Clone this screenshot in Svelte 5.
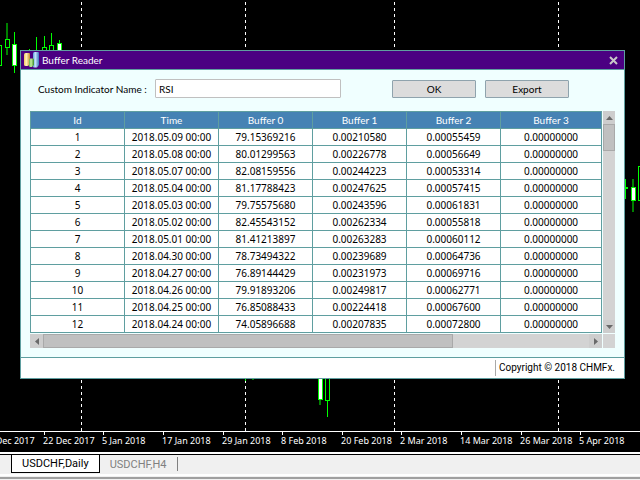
<script lang="ts">
	type Candle = {
		x: number;
		high: number;
		low: number;
		top: number;
		bottom: number;
		kind: 'bull' | 'bear';
		dim?: boolean;
	};

	const columns = ['Id', 'Time', 'Buffer 0', 'Buffer 1', 'Buffer 2', 'Buffer 3'];

	const rows = [
		['2018.05.09 00:00', '79.15369216', '0.00210580', '0.00055459', '0.00000000'],
		['2018.05.08 00:00', '80.01299563', '0.00226778', '0.00056649', '0.00000000'],
		['2018.05.07 00:00', '82.08159556', '0.00244223', '0.00053314', '0.00000000'],
		['2018.05.04 00:00', '81.17788423', '0.00247625', '0.00057415', '0.00000000'],
		['2018.05.03 00:00', '79.75575680', '0.00243596', '0.00061831', '0.00000000'],
		['2018.05.02 00:00', '82.45543152', '0.00262334', '0.00055818', '0.00000000'],
		['2018.05.01 00:00', '81.41213897', '0.00263283', '0.00060112', '0.00000000'],
		['2018.04.30 00:00', '78.73494322', '0.00239689', '0.00064736', '0.00000000'],
		['2018.04.27 00:00', '76.89144429', '0.00231973', '0.00069716', '0.00000000'],
		['2018.04.26 00:00', '79.91893206', '0.00249817', '0.00062771', '0.00000000'],
		['2018.04.25 00:00', '76.85088433', '0.00224418', '0.00067600', '0.00000000'],
		['2018.04.24 00:00', '74.05896688', '0.00207835', '0.00072800', '0.00000000']
	];

	const separators = [81, 245, 394, 558];

	const candles: Candle[] = [
		{ x: -1, high: 45, low: 65, top: 45, bottom: 65, kind: 'bull' },
		{ x: 7, high: 23, low: 55, top: 39, bottom: 47, kind: 'bull', dim: true },
		{ x: 14, high: 32, low: 73, top: 44, bottom: 65, kind: 'bear' },
		{ x: 29, high: 49, low: 60, top: 52, bottom: 58, kind: 'bull' },
		{ x: 36, high: 37, low: 60, top: 50, bottom: 58, kind: 'bull' },
		{ x: 44, high: 36, low: 60, top: 47, bottom: 58, kind: 'bull' },
		{ x: 51, high: 33, low: 60, top: 45, bottom: 58, kind: 'bull' },
		{ x: 59, high: 40, low: 60, top: 43, bottom: 58, kind: 'bear' },
		{ x: 245, high: 370, low: 381, top: 370, bottom: 376, kind: 'bull' },
		{ x: 253, high: 370, low: 380, top: 370, bottom: 376, kind: 'bull', dim: true },
		{ x: 320, high: 360, low: 405, top: 360, bottom: 399, kind: 'bear', dim: true },
		{ x: 327, high: 360, low: 417, top: 360, bottom: 400, kind: 'bull' },
		{ x: 625, high: 179, low: 199, top: 187, bottom: 188, kind: 'bull' },
		{ x: 633, high: 179, low: 212, top: 187, bottom: 200, kind: 'bear', dim: true },
		{ x: 640, high: 166, low: 200, top: 166, bottom: 200, kind: 'bull' }
	];

	const axis = [
		{ x: -16, label: '12 Dec 2017' },
		{ x: 44, label: '22 Dec 2017' },
		{ x: 103, label: '5 Jan 2018' },
		{ x: 163, label: '17 Jan 2018' },
		{ x: 223, label: '29 Jan 2018' },
		{ x: 282, label: '8 Feb 2018' },
		{ x: 342, label: '20 Feb 2018' },
		{ x: 401, label: '2 Mar 2018' },
		{ x: 461, label: '14 Mar 2018' },
		{ x: 521, label: '26 Mar 2018' },
		{ x: 580, label: '5 Apr 2018' }
	];

	let indicator = $state('RSI');
	let open = $state(true);
	let activeTab = $state('USDCHF,Daily');

	function exportCsv() {
		const lines = [columns.join(','), ...rows.map((row, i) => [i + 1, ...row].join(','))];
		const url = URL.createObjectURL(new Blob([lines.join('\n')], { type: 'text/csv' }));
		const link = document.createElement('a');
		link.href = url;
		link.download = `${indicator}.csv`;
		link.click();
		URL.revokeObjectURL(url);
	}
</script>

<div class="terminal">
	<main class="workspace">
		<svg class="chart" aria-hidden="true" shape-rendering="crispEdges">
			{#each separators as x}
				<line class="separator" x1={x + 0.5} x2={x + 0.5} y1="-4" y2="100%" />
			{/each}
			{#each candles as candle}
				<g class={candle.kind}>
					<rect
						class="wick"
						class:dim={candle.dim}
						x={candle.dim ? candle.x - 1 : candle.x}
						y={candle.high}
						width={candle.dim ? 2 : 1}
						height={candle.low - candle.high}
					/>
					<rect
						class="body"
						x={candle.x - 1.5}
						y={candle.top + 0.5}
						width="4"
						height={candle.bottom - candle.top}
					/>
				</g>
			{/each}
		</svg>

		{#if open}
			<section class="dialog" aria-labelledby="dialog-title">
				<header class="titlebar">
					<svg class="logo" width="16" height="16" viewBox="0 0 16 16" aria-hidden="true">
						<defs>
							<linearGradient id="bar-gold">
								<stop offset="0" stop-color="#f3c65c" />
								<stop offset="0.4" stop-color="#fff0b8" />
								<stop offset="1" stop-color="#c98a2c" />
							</linearGradient>
							<linearGradient id="bar-green">
								<stop offset="0" stop-color="#59b13c" />
								<stop offset="0.4" stop-color="#c9f0a0" />
								<stop offset="1" stop-color="#388a24" />
							</linearGradient>
							<linearGradient id="bar-blue">
								<stop offset="0" stop-color="#5fa0df" />
								<stop offset="0.4" stop-color="#c5e4fb" />
								<stop offset="1" stop-color="#3c74bd" />
							</linearGradient>
						</defs>
						<path d="M0 2.500q0-1.500 1.500-1.500h3.500q1 0 1 1v10l-2 2H1.500q-1.500 0-1.500-1.500z" fill="url(#bar-gold)" />
						<path d="M9 1.500q0-1.500 1.500-1.500h3.500q1 0 1 1v12l-2 2.500h-3q-1 0-1-1z" fill="url(#bar-blue)" />
						<path d="M5 8q0-1.500 1.500-1.500h2.500q1 0 1 1v5.500l-2 2H6q-1 0-1-1z" fill="url(#bar-green)" />
					</svg>
					<h1 id="dialog-title">Buffer Reader</h1>
					<button type="button" class="close" aria-label="Close" onclick={() => (open = false)}>
						<svg width="9" height="9" viewBox="0 0 9 9" aria-hidden="true">
							<path d="M1 1l7 7M8 1l-7 7" stroke="#c8c8c8" stroke-width="2" />
						</svg>
					</button>
				</header>

				<div class="content">
					<form class="toolbar" onsubmit={(e) => e.preventDefault()}>
						<label for="indicator">Custom Indicator Name :</label>
						<input id="indicator" type="text" bind:value={indicator} />
						<div class="actions">
							<button type="submit">OK</button>
							<button type="button" onclick={exportCsv}>Export</button>
						</div>
					</form>

					<div class="grid">
						<table>
							<thead>
								<tr>
									{#each columns as column}
										<th scope="col">{column}</th>
									{/each}
								</tr>
							</thead>
							<tbody>
								{#each rows as row, i}
									<tr>
										<td>{i + 1}</td>
										{#each row as value}
											<td>{value}</td>
										{/each}
									</tr>
								{/each}
							</tbody>
						</table>

						<div class="scroll vertical">
							<button type="button" aria-label="Scroll up">
								<svg width="7" height="4" viewBox="0 0 7 4"><path d="M0 4L3.500 0L7 4z" /></svg>
							</button>
							<div class="track"><div class="thumb"></div></div>
							<button type="button" aria-label="Scroll down">
								<svg width="7" height="4" viewBox="0 0 7 4"><path d="M0 0L3.500 4L7 0z" /></svg>
							</button>
						</div>

						<div class="scroll horizontal">
							<button type="button" aria-label="Scroll left">
								<svg width="4" height="7" viewBox="0 0 4 7"><path d="M4 0L0 3.500L4 7z" /></svg>
							</button>
							<div class="track"><div class="thumb"></div></div>
							<button type="button" aria-label="Scroll right">
								<svg width="4" height="7" viewBox="0 0 4 7"><path d="M0 0L4 3.500L0 7z" /></svg>
							</button>
						</div>
						<div class="corner"></div>
					</div>
				</div>

				<footer class="statusbar">
					<span>Copyright © 2018 CHMFx.</span>
				</footer>
			</section>
		{/if}
	</main>

	<svg class="axis" height="23" shape-rendering="crispEdges">
		<rect width="100%" height="1" fill="#fff" />
		{#each axis as tick}
			<rect x={tick.x} y="1" width="1" height="3" fill="#fff" />
			<text x={tick.x - 1} y="13">{tick.label}</text>
		{/each}
		<rect y="21" width="100%" height="2" fill="#fff" />
	</svg>

	<nav class="tabs" aria-label="Charts">
		{#each ['USDCHF,Daily', 'USDCHF,H4'] as tab}
			<button
				type="button"
				class:active={activeTab === tab}
				aria-pressed={activeTab === tab}
				onclick={() => (activeTab = tab)}
			>
				{tab}
			</button>
		{/each}
		<span class="divider"></span>
	</nav>
	<div class="bottom-edge"></div>
</div>

<style>
	:global(body) {
		background: #000;
	}

	.terminal {
		display: flex;
		flex-direction: column;
		min-height: 100vh;
		background: #000;
		color: #000;
		font-family: Lato, 'Open Sans', sans-serif;
		font-size: 10px;
		line-height: 16px;
	}

	.terminal * {
		box-sizing: border-box;
	}

	button,
	input {
		font: inherit;
		color: inherit;
		margin: 0;
		padding: 0;
	}

	.workspace {
		position: relative;
		flex: 1;
		padding: 50px 15px 52px 20px;
		overflow: hidden;
	}

	.chart {
		position: absolute;
		inset: 0;
		width: 100%;
		height: 100%;
	}

	.separator {
		stroke: #fff;
		stroke-dasharray: 3 3;
	}

	.wick {
		fill: #0f0;
	}

	.wick.dim {
		fill: #008000;
	}

	.body {
		fill: #000;
		stroke: #0f0;
	}

	.bear .body {
		fill: #fff;
	}

	.dialog {
		position: relative;
		border: 1px solid #5f9ea0;
		background: #f0ffff;
	}

	.titlebar {
		display: flex;
		align-items: center;
		gap: 2px;
		height: 19px;
		padding: 0 6px 0 3px;
		border-bottom: 1px solid #5f9ea0;
		background: #4b0082;
		color: #fff;
	}

	h1 {
		flex: 1;
		margin: 0;
		font-size: 10px;
		font-weight: 400;
	}

	.close {
		display: flex;
		border: 0;
		background: none;
	}

	.content {
		padding: 9px;
	}

	.toolbar {
		display: flex;
		align-items: center;
		margin-bottom: 13px;
		padding-left: 8px;
	}

	.toolbar label {
		width: 117px;
		white-space: nowrap;
	}

	.toolbar input {
		flex: 0 1 186px;
		min-width: 0;
		height: 19px;
		padding: 0 3px;
		border: 1px solid #c0c0c0;
		border-radius: 1px;
		background: #fff;
	}

	.actions {
		display: flex;
		gap: 9px;
		margin-left: auto;
		padding-right: 46px;
	}

	.actions button {
		width: 84px;
		height: 18px;
		border: 1px solid #8fa3ad;
		border-radius: 1px;
		background: #dcdcdc;
		line-height: 16px;
	}

	.grid {
		display: grid;
		grid-template-columns: 1fr 12px;
		grid-template-rows: auto 14px;
		gap: 1px;
	}

	table {
		width: 100%;
		border-collapse: collapse;
		table-layout: fixed;
		background: #fff;
	}

	th,
	td {
		height: 17px;
		padding: 0;
		border: 1px solid #5f9ea0;
		text-align: center;
		font-weight: 400;
		line-height: 16px;
		white-space: nowrap;
	}

	td {
		font-family: 'Noto Sans', 'Open Sans', sans-serif;
	}

	th {
		background: #4682b4;
		color: #fff;
	}

	th:last-child {
		width: 101px;
	}

	.scroll {
		display: flex;
		background: #d3d3d3;
	}

	.scroll button {
		display: grid;
		place-items: center;
		flex: 0 0 13px;
		border: 0;
		background: #cdcdcd;
	}

	.scroll path {
		fill: #696969;
	}

	.vertical {
		flex-direction: column;
	}

	.track {
		flex: 1;
	}

	.thumb {
		border: 1px solid #a9a9a9;
		background: #c0c0c0;
	}

	.vertical .thumb {
		height: 27px;
	}

	.horizontal .thumb {
		width: 75%;
		height: 14px;
	}

	.corner {
		background: #d3d3d3;
	}

	.statusbar {
		display: flex;
		justify-content: flex-end;
		padding: 2px 0;
		border-top: 1px solid #5f9ea0;
		background: #fff;
		font-family: Roboto, 'Liberation Sans', sans-serif;
	}

	.statusbar span {
		padding: 0 9px 0 3px;
		border-left: 1px solid #a9a9a9;
	}

	.axis {
		display: block;
		width: 100%;
	}

	.axis text {
		fill: #fff;
		font-family: 'Noto Sans', 'Open Sans', sans-serif;
		font-size: 9px;
	}

	.tabs {
		display: flex;
		align-items: flex-start;
		padding-left: 11px;
		border-top: 1px solid #000;
		background: #f0f0f0;
	}

	.tabs button {
		height: 18px;
		padding: 0 10px;
		border: 0;
		background: none;
		color: #808080;
		font-family: Roboto, 'Liberation Sans', sans-serif;
		font-size: 11px;
		line-height: 17px;
	}

	.tabs .active {
		border: solid #000;
		border-width: 0 1px 1px;
		background: #fff;
		color: #000;
	}

	.divider {
		width: 1px;
		height: 14px;
		margin-top: 2px;
		background: #808080;
	}

	.bottom-edge {
		height: 7px;
		background: linear-gradient(#f0f0f0 1px, #fff 1px 3px, #f0f0f0 3px 4px, #a0a0a0 4px 6px, #f0f0f0 6px);
	}
</style>
